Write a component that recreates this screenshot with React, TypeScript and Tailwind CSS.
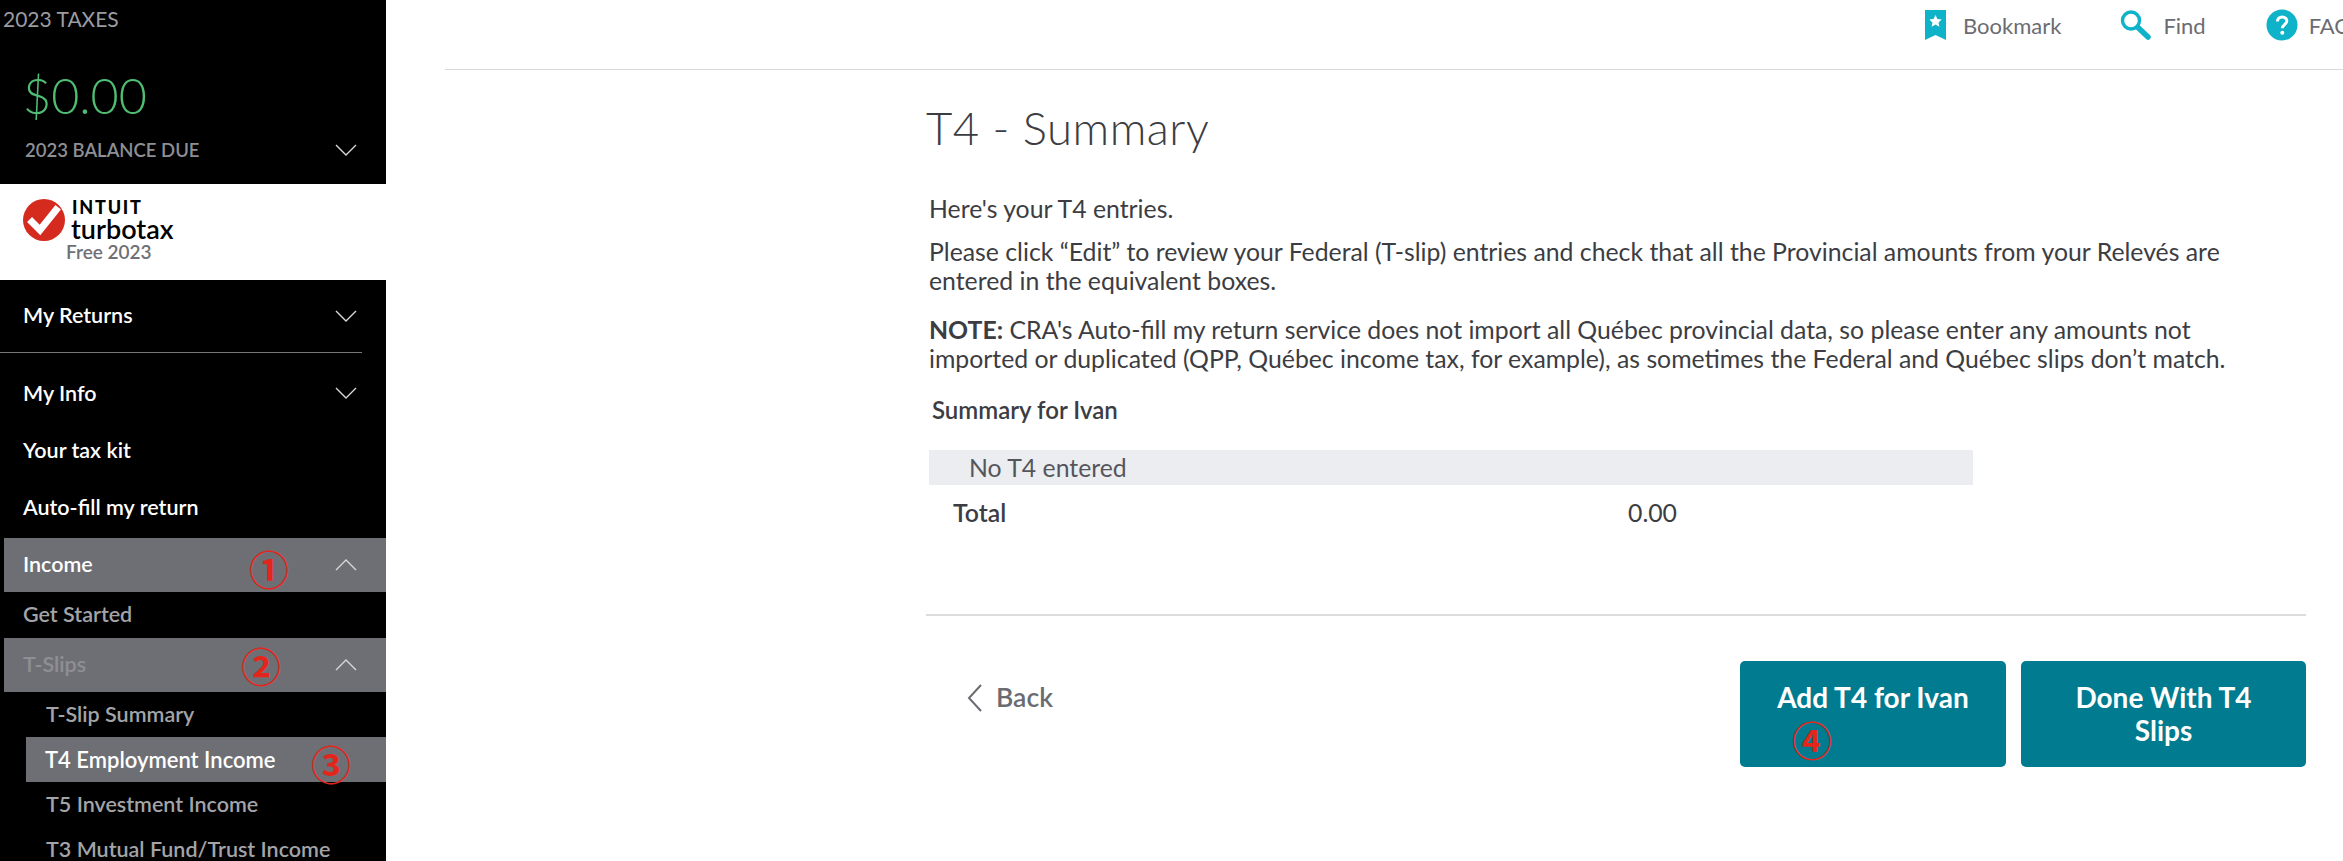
import type { ReactNode } from 'react'

const Chevron = ({ up = false }: { up?: boolean }) => (
  <svg width="22" height="12" viewBox="0 0 22 12" fill="none" stroke="#d8d8da" strokeWidth="1.4" className="shrink-0">
    <polyline points={up ? '1,11 11,1 21,11' : '1,1 11,11 21,1'} />
  </svg>
)

// red hand-drawn step markers sitting on top of the row
const Marker = ({ n, className }: { n: string; className: string }) => (
  <span className={`absolute flex h-[40px] w-[40px] items-center justify-center text-[40px] leading-none text-[#e2261c] [font-family:'Noto_Sans_CJK_SC',sans-serif] ${className}`}>
    {n}
  </span>
)

const NavRow = ({ label, children, className = '' }: { label: string; children?: ReactNode; className?: string }) => (
  <div className={`relative flex items-center justify-between pb-[1px] pl-[23px] pr-[29px] text-[21.5px] font-semibold ${className}`}>
    <span>{label}</span>
    {children}
  </div>
)

function Sidebar() {
  return (
    <aside className="flex h-[861px] w-[386px] shrink-0 flex-col overflow-hidden bg-black text-white">
      {/* Balance */}
      <div className="h-[184px] shrink-0">
        <div className="h-[38px] pl-[3px] text-[21px] leading-[38px] text-[#9b9ca1]">2023 TAXES</div>
        <div className="mt-[20px] pl-[23px] text-[48.5px] font-light leading-[74px] text-[#4fbd74]">$0.00</div>
        <div className="flex items-center justify-between pl-[25px] pr-[29px] pt-[4px] text-[18.5px] font-semibold leading-[28px] text-[#8e8f94]">
          <span>2023 BALANCE DUE</span>
          <Chevron />
        </div>
      </div>

      {/* Logo */}
      <div className="flex h-[96px] shrink-0 bg-white pl-[23px] pt-[15px] text-black">
        <svg width="42" height="42" viewBox="0 0 42 42" className="shrink-0">
          <circle cx="21" cy="21" r="21" fill="#d52b1e" />
          <path d="M9 23 L17 31 L33 11" fill="none" stroke="#fff" strokeWidth="7" strokeLinecap="square" />
        </svg>
        <div className="ml-[6px] flex flex-col">
          <span className="pl-[1px] text-[18px] font-black leading-[17px] tracking-[1.8px]">INTUIT</span>
          <span className="text-[27px] font-semibold leading-[26px]">turbotax</span>
          <span className="-ml-[5px] text-[19px] font-semibold leading-[20px] text-[#6f7076]">Free 2023</span>
        </div>
      </div>

      {/* Nav */}
      <nav className="flex flex-col">
        <NavRow label="My Returns" className="h-[72px]"><Chevron /></NavRow>
        <div className="h-px w-[362px] bg-[#77787c]" />
        <NavRow label="My Info" className="h-[81px]"><Chevron /></NavRow>
        <NavRow label="Your tax kit" className="h-[33px]" />
        <NavRow label="Auto-fill my return" className="mt-[24px] h-[33px]" />
        <div className="ml-[4px] mt-[14px]">
          <NavRow label="Income" className="h-[54px] bg-[#6e6f75] !pl-[19px]">
            <Marker n="①" className="left-[245px] top-[10px]" />
            <Chevron up />
          </NavRow>
        </div>
        <NavRow label="Get Started" className="h-[46px] text-[#a3a4a8]" />
        <div className="ml-[4px]">
          <NavRow label="T-Slips" className="h-[54px] bg-[#6e6f75] text-[#8e8f94] !pl-[19px]">
            <Marker n="②" className="left-[237px] top-[7px]" />
            <Chevron up />
          </NavRow>
        </div>
        <NavRow label="T-Slip Summary" className="h-[45px] !pl-[46px] text-[#a3a4a8]" />
        <div className="ml-[26px]">
          <NavRow label="T4 Employment Income" className="h-[45px] bg-[#6e6f75] !pl-[19px] !text-[22px] font-bold">
            <Marker n="③" className="left-[285px] top-[6px]" />
          </NavRow>
        </div>
        <NavRow label="T5 Investment Income" className="h-[45px] !pl-[46px] text-[#a3a4a8]" />
        <NavRow label="T3 Mutual Fund/Trust Income" className="h-[45px] whitespace-nowrap !pl-[46px] text-[#a3a4a8]" />
      </nav>
    </aside>
  )
}

const TopLink = ({ icon, label, className }: { icon: ReactNode; label: string; className: string }) => (
  <div className={`flex shrink-0 items-center ${className}`}>
    {icon}
    <span className="text-[22px] text-[#6b6c72]">{label}</span>
  </div>
)

function TopBar() {
  return (
    <div className="ml-[59px] flex h-[70px] items-start overflow-hidden border-b border-[#d9d9db] pt-[10px]">
      <TopLink
        className="ml-[1480px] h-[30px]"
        label="Bookmark"
        icon={
          <svg width="21" height="30" viewBox="0 0 21 30" className="mr-[17px]">
            <path d="M0 0H21V30L10.5 25L0 30Z" fill="#0fb3c9" />
            <path d="M10.5 5l1.9 4 4.3.5-3.2 2.9.9 4.3-3.9-2.2-3.9 2.2.9-4.3-3.2-2.9 4.3-.5z" fill="#fff" />
          </svg>
        }
      />
      <TopLink
        className="ml-[59px] h-[30px]"
        label="Find"
        icon={
          <svg width="31" height="30" viewBox="0 0 31 30" className="mr-[12px]">
            <circle cx="11" cy="10.5" r="8.5" fill="none" stroke="#0fb3c9" strokeWidth="3.4" />
            <path d="M18 17.5L28 27" stroke="#0fb3c9" strokeWidth="5.5" strokeLinecap="round" />
          </svg>
        }
      />
      <TopLink
        className="ml-[60px] h-[30px]"
        label="FAQ"
        icon={
          <svg width="32" height="32" viewBox="0 0 32 32" className="mr-[11px]">
            <circle cx="16" cy="16" r="15.5" fill="#0fb3c9" />
            <path d="M11.5 12.5c0-2.8 2-4.5 4.7-4.5s4.6 1.7 4.6 4c0 3.6-4.5 3.6-4.5 7.2" fill="none" stroke="#fff" strokeWidth="3" />
            <circle cx="16.3" cy="23.8" r="2" fill="#fff" />
          </svg>
        }
      />
    </div>
  )
}

function Content() {
  return (
    <div className="ml-[540px] w-[1380px] text-[#3c3d42]">
      <h1 className="mt-[32px] text-[45.5px] font-light leading-[52px] tracking-[0.5px]">T4 - Summary</h1>

      <div className="pl-[3px] text-[24.8px] leading-[29px]">
        <p className="mt-[40px]">Here's your T4 entries.</p>
        <p className="mt-[14px] w-[1340px]">
          Please click “Edit” to review your Federal (T-slip) entries and check that all the Provincial amounts from your Relevés are entered in the equivalent boxes.
        </p>
        <p className="mt-[20px] w-[1340px]">
          <strong className="font-bold">NOTE:</strong> CRA's Auto-fill my return service does not import all Québec provincial data, so please enter any amounts not imported or duplicated (QPP, Québec income tax, for example), as sometimes the Federal and Québec slips don’t match.
        </p>
      </div>

      <div className="mt-[23px] pl-[6px] text-[24px] font-semibold leading-[28px]">Summary for Ivan</div>

      <div className="ml-[3px] mt-[26px] flex h-[35px] w-[1044px] items-center bg-[#ecedf1] pl-[40px] text-[24.8px] text-[#55565b]">
        No T4 entered
      </div>
      <div className="ml-[27px] flex h-[56px] items-center text-[24.8px]">
        <span className="w-[675px] font-semibold">Total</span>
        <span>0.00</span>
      </div>

      <div className="mt-[73px] h-[2px] bg-[#dcdcde]" />

      <div className="mt-[45px] flex items-start">
        <div className="ml-[41px] mt-[17px] flex flex-1 items-center text-[26.5px] font-semibold text-[#6b6c72]">
          <svg width="16" height="28" viewBox="0 0 16 28" fill="none" stroke="#6b6c72" strokeWidth="2" className="mr-[13px]">
            <polyline points="14,1 2,14 14,27" />
          </svg>
          Back
        </div>
        <button className="relative h-[106px] w-[266px] rounded-[5px] bg-[#007b8f] px-[10px] pb-[34px] text-[28px] font-bold text-white">
          Add T4 for Ivan
          <Marker n="④" className="left-[52px] top-[58px]" />
        </button>
        <button className="ml-[15px] h-[106px] w-[285px] rounded-[5px] bg-[#007b8f] px-[30px] text-[28px] font-bold leading-[33px] text-white">
          Done With T4 Slips
        </button>
      </div>
    </div>
  )
}

export default function App() {
  return (
    <div className="flex h-[861px] w-[2343px] overflow-hidden bg-white [font-family:Lato,sans-serif]">
      <Sidebar />
      <main className="min-w-0 flex-1 overflow-hidden">
        <TopBar />
        <Content />
      </main>
    </div>
  )
}
